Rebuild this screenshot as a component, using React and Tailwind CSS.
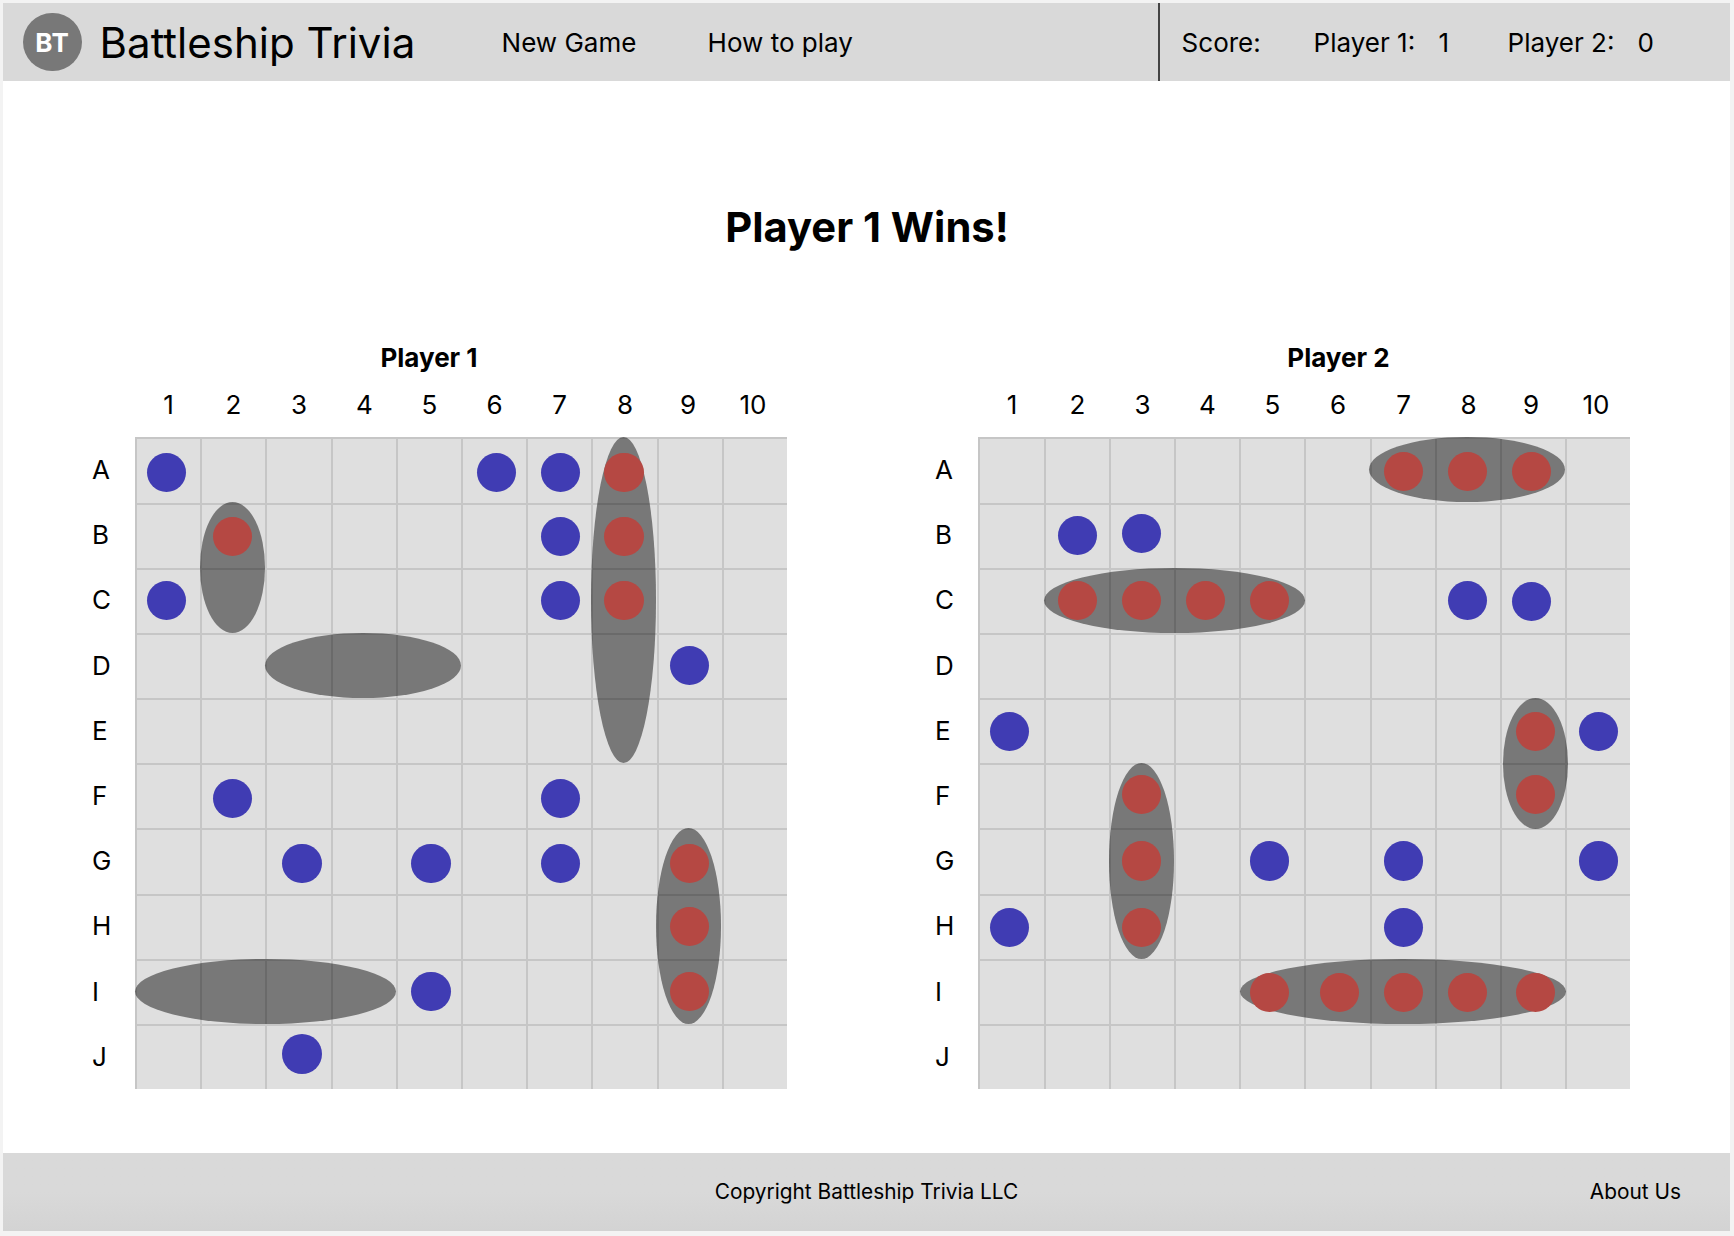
const ROWS = ["A", "B", "C", "D", "E", "F", "G", "H", "I", "J"];
const COLUMNS = [1, 2, 3, 4, 5, 6, 7, 8, 9, 10];

// Ships are [left, top, width, height]; pegs are [center x, center y]; both in board pixels.
const BOARDS = [
  {
    name: "Player 1",
    columns: "grid-cols-[65px_65px_66px_65px_65px_65px_65px_66px_65px_65px]",
    title: "pr-[22px]",
    ships: [
      [65, 65.2, 65.2, 130.5],
      [130.4, 195.7, 195.6, 65.2],
      [456, 0.2, 65.2, 326],
      [521.2, 391.2, 65.2, 195.7],
      [0, 521.6, 260.7, 65.2],
    ],
    misses: [
      [31.4, 35.5], [361.2, 35.5], [425.1, 35.5], [425.1, 99.4], [31.4, 163.3],
      [425.1, 163.3], [554.2, 228.4], [97.9, 361.4], [425.1, 361.4], [167, 426.6],
      [296, 426.6], [425.1, 426.6], [296, 554.4], [167, 617],
    ],
    hits: [
      [489, 35.5], [97.9, 99.4], [489, 99.4], [489, 163.3], [554.2, 426.6],
      [554.2, 489.2], [554.2, 554.4],
    ],
  },
  {
    name: "Player 2",
    columns: "grid-cols-[66px_65px_65px_65px_65px_66px_65px_65px_65px_65px]",
    title: "pl-[111px]",
    ships: [
      [391.4, 0.2, 195.6, 65.2],
      [65.6, 130.7, 261, 65.2],
      [524.6, 261, 65.2, 130.5],
      [131, 326, 65.2, 195.7],
      [262.3, 521.6, 326, 65.2],
    ],
    misses: [
      [99.5, 98.1], [163.4, 96.8], [489.3, 163.3], [553.2, 164.6], [31.6, 294.9],
      [620.9, 294.9], [291.2, 424], [425.4, 424], [620.9, 424], [31.6, 490.5], [425.4, 490.5],
    ],
    hits: [
      [425.4, 34.3], [489.3, 34.3], [553.2, 34.3], [99.5, 163.3], [163.4, 163.3],
      [227.3, 163.3], [291.2, 163.3], [557.2, 294.9], [557.2, 357.5], [163.4, 357.5],
      [163.4, 424], [163.4, 490.5], [291.2, 555.7], [361.6, 555.7], [425.4, 555.7],
      [489.3, 555.7], [557.2, 555.7],
    ],
  },
];

function Ship({ box: [left, top, width, height] }) {
  return <div className="absolute rounded-[50%] bg-[#787878]" style={{ left, top, width, height }} />;
}

function Peg({ at: [x, y], hit }) {
  return (
    <div
      className={`absolute size-[39.2px] rounded-full ${hit ? "bg-[#b54843]" : "bg-[#403cb3]"}`}
      style={{ left: x - 19.6, top: y - 19.6 }}
    />
  );
}

function Board({ board }) {
  return (
    <section className="w-[694px]">
      <h2 className={`text-center text-[26px] leading-8 font-bold ${board.title}`}>{board.name}</h2>
      <div className={`mt-[15px] ml-[42px] grid ${board.columns} text-center text-[26px] leading-8`}>
        {COLUMNS.map((n) => (
          <span key={n} className={n > 8 ? "-ml-[2px] pr-[1px]" : "pl-[2px]"}>{n}</span>
        ))}
      </div>
      <div className="mt-4 flex">
        <div className="-ml-px grid w-[43px] grid-rows-[repeat(10,65.2px)] text-[26px]">
          {ROWS.map((r) => (
            <span key={r} className="leading-[65px]">{r}</span>
          ))}
        </div>
        <div className="relative h-[652px] w-[652px] bg-[#dfdfdf]">
          {board.ships.map((box, i) => <Ship key={i} box={box} />)}
          <div className={`relative grid ${board.columns} grid-rows-[66px_65px_65px_65px_65px_65px_66px_65px_65px_65px]`}>
            {ROWS.flatMap((r) =>
              COLUMNS.map((c) => <div key={r + c} className="border-t-2 border-l-2 border-black/11" />)
            )}
          </div>
          {board.misses.map((at, i) => <Peg key={i} at={at} />)}
          {board.hits.map((at, i) => <Peg key={i} at={at} hit />)}
        </div>
      </div>
    </section>
  );
}

export default function App() {
  return (
    <div className="h-[1236px] w-[1734px] bg-[#f3f3f3] px-[3px] pt-[3px] font-['Inter',sans-serif] whitespace-nowrap text-black">
      <header className="flex h-[78px] w-[1727px] items-center bg-[#d9d9d9] text-[26px]">
        <div className="ml-5 flex size-[58.6px] items-center justify-center rounded-full bg-[#787878] font-bold tracking-[0.6px] text-white">
          BT
        </div>
        <h1 className="ml-[18px] w-[402px] text-[42px]">Battleship Trivia</h1>
        <nav className="flex">
          <a className="w-[206px]">New Game</a>
          <a className="w-[450px]">How to play</a>
        </nav>
        <div className="flex h-full items-center border-l-2 border-[#444] pl-[22px]">
          <span className="w-[132px]">Score:</span>
          <span className="w-[125px]">Player 1:</span>
          <span className="w-[69px]">1</span>
          <span className="w-[130px]">Player 2:</span>
          <span>0</span>
        </div>
      </header>
      <main className="h-[1072px] w-[1727px] bg-white pt-[120px]">
        <h1 className="pl-px text-center text-[41.7px] leading-[52px] font-bold">Player 1 Wins!</h1>
        <div className="mt-[89px] ml-[90px] flex gap-[149px]">
          {BOARDS.map((board) => <Board key={board.name} board={board} />)}
        </div>
      </main>
      <footer className="grid h-[78px] w-[1727px] grid-cols-3 items-center bg-linear-to-b from-[#d9d9d9] from-50% to-[#d3d3d3] text-[20.85px]">
        <span />
        <span className="text-center">Copyright Battleship Trivia LLC</span>
        <a className="pr-[49px] text-right">About Us</a>
      </footer>
    </div>
  );
}
